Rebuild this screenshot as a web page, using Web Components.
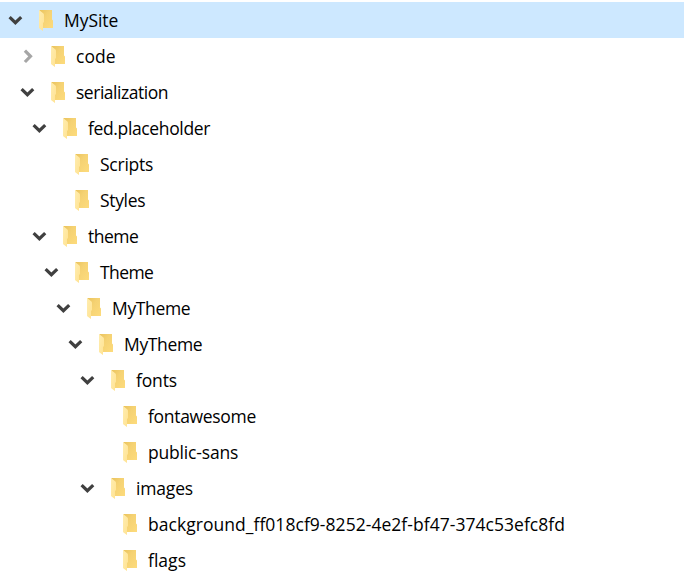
<!DOCTYPE html>
<html lang="en"><head><meta charset="utf-8"><title>MySite</title>
<style>html,body{margin:0;background:#fff}</style></head><body>
<folder-tree></folder-tree>
<script>
class TreeChevron extends HTMLElement{
  connectedCallback(){
    const open=this.hasAttribute('open');
    this.attachShadow({mode:'open'}).innerHTML=`<style>:host{display:block;width:16px;height:16px;flex:none}svg{display:block}</style>
    <svg width="16" height="16" viewBox="0 0 16 16" fill="none" stroke-width="3.2">${open?'<path stroke="#404040" d="M2.6 5.1 8.4 10.7 14.2 5.1"/>':'<path stroke="#a6a6a6" d="M5.9 2.6 11.5 8.3 5.9 14"/>'}</svg>`;
  }
}
customElements.define('tree-chevron',TreeChevron);
class FolderIcon extends HTMLElement{
  connectedCallback(){
    this.attachShadow({mode:'open'}).innerHTML=`<style>:host{display:block;width:16px;height:22px;flex:none}svg{display:block}</style>
    <svg width="16" height="22" viewBox="0 0 16 22"><defs><linearGradient id="b" x1="0" x2="1" y2="1"><stop stop-color="#eac35d"/><stop offset=".4" stop-color="#f5d273"/><stop offset="1" stop-color="#fddb7c"/></linearGradient><linearGradient id="f" x2="1" y2="1"><stop stop-color="#ffedb0"/><stop offset="1" stop-color="#ffe291"/></linearGradient></defs>
    <path fill="url(#b)" d="M.5 0H13V9.4L14 10.5V18H.5Z"/><path fill="url(#f)" d="M0 0 4.2 3.2Q5 3.8 5 4.7V12L4 13V21L.5 18.6Q0 18.2 0 17.5Z"/></svg>`;
  }
}
customElements.define('folder-icon',FolderIcon);
class TreeRow extends HTMLElement{
  connectedCallback(){
    const state=this.getAttribute('state');
    this.attachShadow({mode:'open'}).innerHTML=`<style>
    :host{display:flex;align-items:center;height:36px;box-sizing:border-box;padding-left:calc(7px + var(--level)*12px);font:17.5px/24px "Open Sans","Noto Sans",sans-serif;color:#000;white-space:nowrap}
    :host([selected]){background:#cde8ff}
    .twisty{width:16px;height:16px;margin-right:16px;flex:none}
    folder-icon{margin:1px 9px 0 0}
    .label{display:block}
    </style><div class="twisty">${state?`<tree-chevron ${state}></tree-chevron>`:''}</div><folder-icon></folder-icon><span class="label"><slot></slot></span>`;
    this.style.setProperty('--level',this.getAttribute('level'));
    const label=this.shadowRoot.querySelector('.label');
    const spare=Number(this.getAttribute('span'))-label.getBoundingClientRect().width;
    label.style.letterSpacing=spare/this.textContent.length+'px';
  }
}
customElements.define('tree-row',TreeRow);
class FolderTree extends HTMLElement{
  connectedCallback(){
    // name, depth, twisty state, label width in px
    const rows=[['MySite',0,'open',54.3],['code',1,'closed',39.5],['serialization',1,'open',92],['fed.placeholder',2,'open',122],['Scripts',3,'',53.2],['Styles',3,'',45.2],['theme',2,'open',50.3],['Theme',3,'open',53.3],['MyTheme',4,'open',78.2],['MyTheme',5,'open',78.2],['fonts',6,'open',41],['fontawesome',7,'',108],['public-sans',7,'',90.2],['images',6,'open',57],['background_ff018cf9-8252-4e2f-bf47-374c53efc8fd',7,'',417],['flags',7,'',38]];
    const root=this.attachShadow({mode:'open'});
    root.innerHTML='<style>:host{display:block;box-sizing:border-box;height:577px;padding-top:2px;overflow:hidden}</style>';
    for(const [name,level,state,span] of rows){
      const row=document.createElement('tree-row');
      row.textContent=name;
      row.setAttribute('level',level);
      row.setAttribute('span',span);
      if(state)row.setAttribute('state',state);
      if(!level)row.setAttribute('selected','');
      root.append(row);
    }
  }
}
customElements.define('folder-tree',FolderTree);
</script></body></html>
